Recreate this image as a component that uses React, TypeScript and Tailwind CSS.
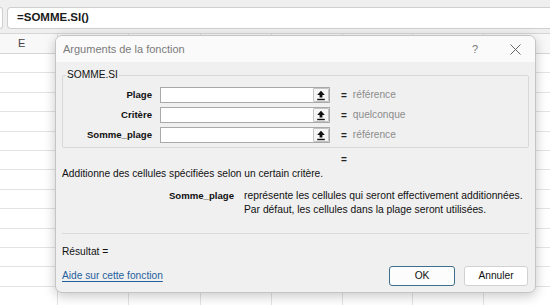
import React from "react";

const F = { fontFamily: '"Liberation Sans", Arial, sans-serif' };

function UploadIcon() {
  return (
    <svg width="10" height="11" viewBox="0 0 10 11">
      <path d="M5 0.8 L1.2 5 H3.6 V7.6 H6.4 V5 H8.8 Z" fill="#111" />
      <rect x="1.2" y="8.8" width="7.6" height="1.4" fill="#111" />
    </svg>
  );
}

function ArgRow({ label, value }: { label: string; value: string }) {
  return (
    <div className="flex items-center h-[16px]">
      <div className="w-[89px] text-right font-bold text-[9.6px] text-[#111]">{label}</div>
      <div className="ml-[8px] w-[170px] h-[16px] flex border border-[#a9a9a9] bg-white">
        <div className="flex-1" />
        <div className="w-[16px] h-[14px] flex items-center justify-center border border-[#c4c4c4] rounded-[1px] bg-[#f6f6f6]">
          <UploadIcon />
        </div>
      </div>
      <div className="ml-[11px] text-[10px] font-bold text-[#222]">=</div>
      <div className="ml-[6px] text-[10.2px] text-[#8c8c8c]">{value}</div>
    </div>
  );
}

export default function App() {
  const cols = [58, 71, 72, 71, 71, 70, 71, 71];
  const rows = Array.from({ length: 14 });
  return (
    <div className="relative w-[550px] h-[305px] overflow-hidden bg-white" style={F}>
      {/* Excel background */}
      <div className="flex flex-col">
        <div className="h-[33px] bg-[#efefef] pt-[7px] flex">
          <div className="w-[3px] h-[22px] bg-white border border-l-0 border-[#d0d0d0] rounded-r-[3px]" />
          <div className="ml-[4px] flex-1 h-[22px] bg-white border border-r-0 border-[#cfcfcf] rounded-l-[4px] flex items-center pl-[9px]">
            <span className="text-[11.5px] font-bold text-[#1a1a1a]">=SOMME.SI()</span>
          </div>
        </div>
        <div className="h-[21px] bg-[#f8f8f8] border-t border-b border-[#d6d6d6] flex">
          {cols.map((w, i) => (
            <div
              key={i}
              style={{ width: w }}
              className="shrink-0 h-full border-r border-[#dcdcdc] flex items-center pl-[18px] text-[11px] text-[#444]"
            >
              {i === 0 ? "E" : ""}
            </div>
          ))}
        </div>
        {rows.map((_, r) => (
          <div key={r} className="h-[19.4px] border-b border-[#e3e3e3] flex">
            {cols.map((w, i) => (
              <div key={i} style={{ width: w }} className="shrink-0 h-full border-r border-[#e3e3e3]" />
            ))}
          </div>
        ))}
      </div>

      {/* Dialog */}
      <div className="absolute left-[55px] top-[35px] w-[481px] h-[258px] rounded-[7px] border border-[#c4c4c4] bg-[#f0f0f0] shadow-[0_3px_12px_rgba(0,0,0,0.22)] overflow-hidden flex flex-col">
        <div className="h-[26px] bg-[#fafafa] flex items-center shrink-0">
          <div className="pl-[7px] text-[11px] text-[#7a7a7a] flex-1">Arguments de la fonction</div>
          <div className="w-[40px] text-center text-[11px] text-[#777]">?</div>
          <div className="w-[40px] flex items-center justify-center">
            <svg width="11" height="11" viewBox="0 0 11 11">
              <path d="M0.5 0.5 L10.5 10.5 M10.5 0.5 L0.5 10.5" stroke="#666" strokeWidth="1" />
            </svg>
          </div>
        </div>
        <div className="flex-1 flex flex-col px-[6px]">
          <div className="relative mt-[13px] h-[73px] border border-[#d8d8d8] rounded-[2px] pt-[11px] flex flex-col gap-[4px]">
            <div className="absolute left-[3px] top-[-7px] px-[1px] bg-[#f0f0f0] text-[10.2px] leading-[12px] text-[#111]">
              SOMME.SI
            </div>
            <ArgRow label="Plage" value="référence" />
            <ArgRow label="Critère" value="quelconque" />
            <ArgRow label="Somme_plage" value="référence" />
          </div>
          <div className="mt-[5px] h-[14px] leading-[14px] pl-[279px] text-[10px] font-bold text-[#222]">=</div>
          <div className="h-[14px] leading-[14px] text-[10.2px] text-[#111]">
            Additionne des cellules spécifiées selon un certain critère.
          </div>
          <div className="mt-[8px] flex">
            <div className="w-[172px] text-right font-bold text-[9.6px] leading-[14px] text-[#111]">Somme_plage</div>
            <div className="ml-[10px] text-[10.3px] leading-[14px] text-[#111]">
              <div>représente les cellules qui seront effectivement additionnées.</div>
              <div>Par défaut, les cellules dans la plage seront utilisées.</div>
            </div>
          </div>
          <div className="mt-[16px] border-t border-[#dadada]" />
          <div className="mt-[11px] h-[14px] leading-[14px] text-[10.2px] text-[#111]">Résultat =</div>
          <div className="mt-[7px] flex items-center">
            <div className="flex-1 text-[10.2px] text-[#1f5f9e] underline underline-offset-[2px]">Aide sur cette fonction</div>
            <div className="w-[66px] h-[20px] rounded-[3px] border border-[#3f6f8f] bg-[#fcfcfc] flex items-center justify-center text-[10.2px] text-[#111]">
              OK
            </div>
            <div className="ml-[9px] mr-[1px] w-[64px] h-[20px] rounded-[3px] border border-[#d2d2d2] bg-white flex items-center justify-center text-[10.2px] text-[#111]">
              Annuler
            </div>
          </div>
        </div>
      </div>
    </div>
  );
}
